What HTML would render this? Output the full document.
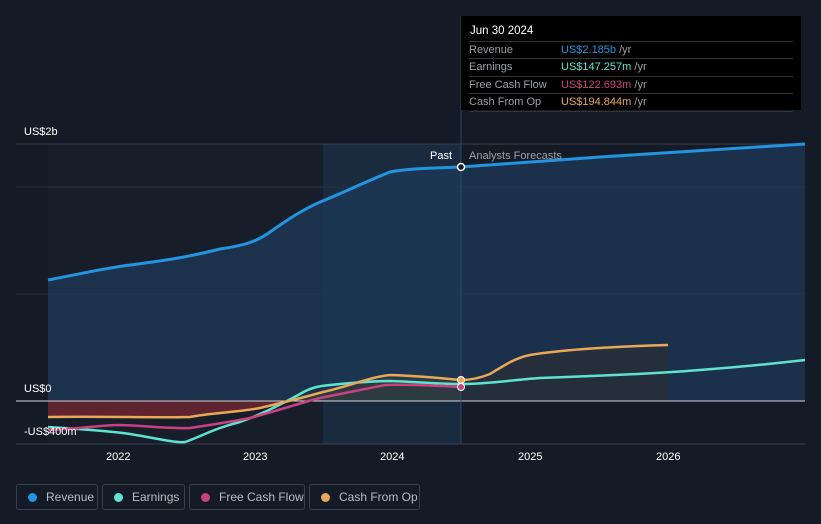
<!DOCTYPE html>
<html><head><meta charset="utf-8"><style>
html,body{margin:0;width:821px;height:524px;overflow:hidden}
body{background:#151b26;font-family:"Liberation Sans",sans-serif;position:relative}
.tt{position:absolute;left:461px;top:16px;width:340px;height:94px;background:#000;color:#fff;font-size:11px}
.tt .h{position:absolute;left:9px;top:9px;font-size:11.5px}
.row{position:absolute;left:8px;width:324px;border-top:1px solid #333;height:17px;line-height:17px;color:#9aa0a6}
.row span{position:absolute;left:92px}
.leg{position:absolute;top:484px;height:26px;border:1px solid #3a404a;border-radius:3px;color:#b8bcc2;font-size:12px;line-height:25px;box-sizing:border-box;white-space:nowrap;overflow:hidden}
.leg i{display:inline-block;width:9px;height:9px;border-radius:50%;margin:0 9px 0 11px;vertical-align:-1px}
.ax{position:absolute;color:#fff;font-size:11px;white-space:nowrap}
</style></head><body>
<svg width="821" height="524" style="position:absolute;left:0;top:0">
<rect x="48" y="144" width="413" height="300" fill="#181e29"/>
<rect x="323" y="144" width="138" height="300" fill="#1b2b3f"/>
<line x1="16" y1="144" x2="805" y2="144" stroke="#3a404a"/>
<line x1="16" y1="187" x2="805" y2="187" stroke="#2a313c"/>
<line x1="16" y1="294" x2="805" y2="294" stroke="#2a313c"/>
<line x1="16" y1="444" x2="805" y2="444" stroke="#3a404a"/>
<path d="M48,280 C80,274 100,269 130,265 C160,261 185,258 220,249 C240,246 255,243 270,232 C290,218 305,208 325,200 C345,192 365,182 390,172 C410,168 440,168 461,167 L600,157 L805,144 L805,401 L48,401Z" fill="#1d3a58" fill-opacity="0.75"/>
<path d="M48,401 L48,417 C100,416 150,418 190,417 C220,413 245,412 260,408 L290,401 Z" fill="#6b2630" fill-opacity="0.85"/>
<path d="M290,401 L323,392 C350,386 370,377 390,375 C420,376 440,378 461,380 L461,401Z" fill="#3a3d38" fill-opacity="0.6"/>
<path d="M461,380 C470,380 480,378 490,374 C505,365 515,358 530,355 C560,350 600,347 668,345 L668,401 L461,401Z" fill="#2a2f34" fill-opacity="0.7"/>
<line x1="16" y1="401" x2="805" y2="401" stroke="#d0d4da"/>
<line x1="461" y1="16" x2="461" y2="444" stroke="#2c4a66"/>
<path d="M48,280 C80,274 100,269 130,265 C160,261 185,258 220,249 C240,246 255,243 270,232 C290,218 305,208 325,200 C345,192 365,182 390,172 C410,168 440,168 461,167 L600,157 L805,144" fill="none" stroke="#2394e0" stroke-width="3"/>
<path d="M48,427 C80,429 110,431 130,434 C160,439 175,443 185,442 C200,437 215,428 240,422 C260,415 280,405 300,394 C310,388 318,386 330,385 C350,383 370,381 390,381 C420,382 440,384 461,384 C490,384 510,380 540,378 C600,376 650,374 700,370 C740,367 770,364 805,360" fill="none" stroke="#5fe3d0" stroke-width="2.5"/>
<path d="M48,430 C80,429 100,425 120,425 C150,426 170,429 190,428 C210,425 230,422 250,418 C280,410 300,403 320,398 C345,393 365,389 385,385 C410,384 440,386 461,387" fill="none" stroke="#c8427f" stroke-width="2.5"/>
<path d="M48,417 C100,416 150,418 190,417 C210,413 240,412 260,408 C290,401 305,397 323,392 C350,386 370,377 390,375 C420,376 440,378 461,380 C470,380 480,378 490,374 C505,365 515,358 530,355 C560,350 600,347 668,345" fill="none" stroke="#e8a857" stroke-width="2.5"/>
<circle cx="461" cy="167" r="3.5" fill="#151b26" stroke="#fff" stroke-width="1.5"/>
<circle cx="461" cy="380" r="3.5" fill="#e8a857" stroke="#fff" stroke-width="1"/>
<circle cx="461" cy="387" r="3.5" fill="#c8427f" stroke="#fff" stroke-width="1"/>
</svg>
<div class="ax" style="left:24px;top:126px">US$2b</div>
<div class="ax" style="left:24px;top:383px">US$0</div>
<div class="ax" style="left:24px;top:426px">-US$400m</div>
<div class="ax" style="left:430px;top:150px">Past</div>
<div class="ax" style="left:469px;top:150px;color:#9aa0a6">Analysts Forecasts</div>
<div class="ax" style="left:106px;top:451px">2022</div>
<div class="ax" style="left:243px;top:451px">2023</div>
<div class="ax" style="left:380px;top:451px">2024</div>
<div class="ax" style="left:518px;top:451px">2025</div>
<div class="ax" style="left:656px;top:451px">2026</div>
<div class="tt"><div class="h">Jun 30 2024</div>
<div class="row" style="top:25px">Revenue<span><b style="font-weight:normal;color:#2394e0">US$2.185b</b> /yr</span></div>
<div class="row" style="top:42px">Earnings<span><b style="font-weight:normal;color:#5fe3d0">US$147.257m</b> /yr</span></div>
<div class="row" style="top:60px">Free Cash Flow<span><b style="font-weight:normal;color:#c8427f">US$122.693m</b> /yr</span></div>
<div class="row" style="top:77px;border-bottom:1px solid #333">Cash From Op<span><b style="font-weight:normal;color:#e8a857">US$194.844m</b> /yr</span></div>
</div>
<div class="leg" style="left:16px;width:82px"><i style="background:#2394e0"></i>Revenue</div>
<div class="leg" style="left:102px;width:83px"><i style="background:#5fe3d0"></i>Earnings</div>
<div class="leg" style="left:189px;width:116px"><i style="background:#c8427f"></i>Free Cash Flow</div>
<div class="leg" style="left:309px;width:111px"><i style="background:#e8a857"></i>Cash From Op</div>
</body></html>
